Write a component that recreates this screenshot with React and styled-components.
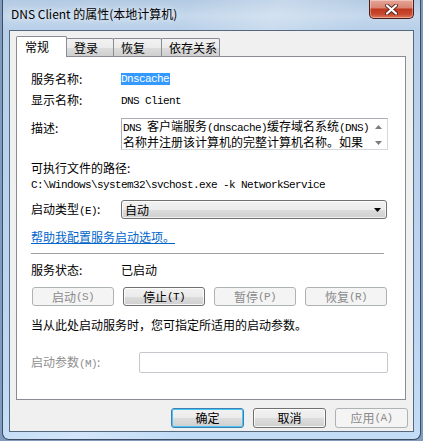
import React from "react";
import styled, { createGlobalStyle, css } from "styled-components";

const GlobalStyle = createGlobalStyle`
  html, body {
    margin: 0;
    padding: 0;
    background: #7f9cbf;
  }
  body {
    font-family: "Noto Sans CJK SC", "Noto Sans", sans-serif;
    font-size: 12px;
    color: #000;
  }
`;

const Frame = styled.div`
  width: 419px;
  height: 440px;
  margin-left: 2px;
  box-sizing: border-box;
  padding: 0 6px 7px 6px;
  display: flex;
  flex-direction: column;
  border: 1px solid #3d4c60;
  border-top: none;
  border-radius: 0 0 7px 7px;
  background:
    linear-gradient(115deg, rgba(255,255,255,0) 30%, rgba(255,255,255,0.25) 45%, rgba(255,255,255,0) 60%),
    linear-gradient(180deg, #b3cae3 0px, #c5d8ec 16px, #b7cfe9 30px, #bcd5f0 70%, #c4ddf7 100%);
`;

const TitleBar = styled.div`
  height: 30px;
  display: flex;
  justify-content: space-between;
  align-items: flex-start;
  padding-left: 2px;
`;

const Title = styled.div`
  margin-top: 6px;
  font-size: 12px;
  line-height: 16px;
  text-shadow: 0 0 6px rgba(255, 255, 255, 0.9);
`;

const CloseButton = styled.div`
  width: 45px;
  height: 19px;
  box-sizing: border-box;
  border: 1px solid #4b1e17;
  border-top: none;
  border-radius: 0 0 5px 5px;
  background: linear-gradient(180deg, #e6a597 0%, #d98674 42%, #c0381f 52%, #c94a30 80%, #dd7a5c 100%);
  box-shadow: inset 0 0 0 1px rgba(255, 255, 255, 0.35);
  display: flex;
  align-items: center;
  justify-content: center;
`;

const Client = styled.div`
  flex: 1;
  box-sizing: border-box;
  background: #f0f0f0;
  border: 1px solid #56687e;
  display: flex;
  flex-direction: column;
  padding: 5px 5px 0 6px;
`;

const TabStrip = styled.div`
  display: flex;
  height: 21px;
  margin-bottom: -1px;
  position: relative;
  z-index: 1;
`;

const Tab = styled.div`
  box-sizing: border-box;
  width: ${p => p.$w}px;
  border: 1px solid #898c95;
  border-bottom: none;
  border-radius: 2px 2px 0 0;
  margin-left: -1px;
  display: flex;
  align-items: center;
  padding-left: 7px;
  line-height: 16px;
  ${p => p.$active ? css`
    height: 21px;
    margin-left: 0;
    background: #fff;
    padding-left: 8px;
  ` : css`
    height: 18px;
    margin-top: 2px;
    background: linear-gradient(180deg, #f2f2f2 0%, #ebebeb 50%, #dddddd 51%, #cfcfcf 100%);
  `}
`;

const Panel = styled.div`
  width: 390px;
  height: 344px;
  box-sizing: border-box;
  background: #fff;
  border: 1px solid #898c95;
  padding: 11px 17px 0 14px;
  display: flex;
  flex-direction: column;
`;

const Row = styled.div`
  display: flex;
  align-items: ${p => p.$top ? "flex-start" : "center"};
  height: ${p => p.$h}px;
  margin-top: ${p => p.$mt || 0}px;
  flex-shrink: 0;
`;

const Label = styled.div`
  width: ${p => p.$w || 90}px;
  flex-shrink: 0;
  line-height: 16px;
  color: ${p => p.$disabled ? "#8f8f8f" : "#000"};
  padding-top: ${p => p.$pt || 0}px;
`;

const Text = styled.div`
  line-height: 16px;
  white-space: nowrap;
`;

const Ascii = styled.span`
  font-family: "Liberation Mono", "DejaVu Sans Mono", monospace;
  font-size: 11px;
  letter-spacing: -0.6px;
`;

const Selected = styled(Ascii)`
  display: inline-block;
  background: #3399ff;
  color: #fff;
  line-height: 12px;
  height: 12px;
  padding-right: 1px;
`;

const DescBox = styled.div`
  width: 267px;
  height: 32px;
  box-sizing: border-box;
  border: 1px solid #abadb3;
  border-right-color: #d5d8dd;
  border-bottom-color: #d5d8dd;
  background: #fff;
  display: flex;
`;

const DescText = styled.div`
  flex: 1;
  padding-left: 1px;
  line-height: 13px;
  white-space: nowrap;
`;

const ScrollBar = styled.div`
  width: 15px;
  margin-right: 1px;
  display: flex;
  flex-direction: column;
  justify-content: space-between;
  align-items: center;
  padding: 6px 0 4px;
`;

const Combo = styled.div`
  width: 266px;
  height: 19px;
  box-sizing: border-box;
  border: 1px solid #707070;
  border-radius: 3px;
  background: linear-gradient(180deg, #f2f2f2 0%, #ebebeb 50%, #dddddd 51%, #cfcfcf 100%);
  box-shadow: inset 0 0 0 1px rgba(255, 255, 255, 0.7);
  display: flex;
  align-items: center;
  justify-content: space-between;
  padding: 0 5px 0 3px;
  line-height: 16px;
`;

const Link = styled.a`
  color: #0066cc;
  text-decoration: underline;
  line-height: 16px;
  cursor: pointer;
`;

const Separator = styled.div`
  width: 353px;
  height: 1px;
  margin-top: 8px;
  background: #a0a0a0;
  flex-shrink: 0;
`;

const ButtonRow = styled.div`
  display: flex;
  gap: 9px;
  margin-top: ${p => p.$mt || 0}px;
  padding-left: ${p => p.$pl || 0}px;
  justify-content: ${p => p.$end ? "flex-end" : "flex-start"};
  flex-shrink: 0;
`;

const Button = styled.div`
  width: ${p => p.$w}px;
  height: ${p => p.$h}px;
  box-sizing: border-box;
  border-radius: 3px;
  display: flex;
  align-items: center;
  justify-content: center;
  line-height: 16px;
  ${p => p.$disabled ? css`
    border: 1px solid #adb2b5;
    background: #f4f4f4;
    color: #8a8a8a;
  ` : css`
    border: 1px solid ${p.$default ? "#3c7fb1" : "#707070"};
    background: linear-gradient(180deg, #f2f2f2 0%, #ebebeb 50%, #dddddd 51%, #cfcfcf 100%);
    box-shadow: inset 0 0 0 1px ${p.$default ? "#48c5f2" : "rgba(255,255,255,0.8)"};
    color: #000;
  `}
`;

const ParamInput = styled.div`
  width: 249px;
  height: 21px;
  box-sizing: border-box;
  border: 1px solid #c5c8cc;
  border-radius: 2px;
  background: #fff;
`;

function Arrow({ up, color = "#7d7d7d", w = 7, h = 4 }) {
  return (
    <svg width={w} height={h} viewBox={`0 0 ${w} ${h}`}>
      <polygon
        points={up ? `0,${h} ${w / 2},0 ${w},${h}` : `0,0 ${w},0 ${w / 2},${h}`}
        fill={color}
      />
    </svg>
  );
}

function CloseX() {
  return (
    <svg width="13" height="11" viewBox="0 0 13 11">
      <path d="M2 1.5 L11 9.5 M11 1.5 L2 9.5" stroke="#5a2a22" strokeWidth="4" strokeLinecap="round" />
      <path d="M2 1.5 L11 9.5 M11 1.5 L2 9.5" stroke="#fff" strokeWidth="2.2" strokeLinecap="round" />
    </svg>
  );
}

const tabs = [
  { name: "常规", w: 51, active: true },
  { name: "登录", w: 48 },
  { name: "恢复", w: 49 },
  { name: "依存关系", w: 59 },
];

export default function App() {
  return (
    <>
      <GlobalStyle />
      <Frame>
        <TitleBar>
          <Title>DNS Client 的属性(本地计算机)</Title>
          <CloseButton><CloseX /></CloseButton>
        </TitleBar>
        <Client>
          <TabStrip>
            {tabs.map(t => (
              <Tab key={t.name} $w={t.w} $active={t.active}>{t.name}</Tab>
            ))}
          </TabStrip>
          <Panel>
            <Row $h={22}>
              <Label>服务名称:</Label>
              <Selected>Dnscache</Selected>
            </Row>
            <Row $h={20}>
              <Label>显示名称:</Label>
              <Text><Ascii>DNS Client</Ascii></Text>
            </Row>
            <Row $h={32} $mt={8} $top>
              <Label $pt={2}>描述:</Label>
              <DescBox>
                <DescText>
                  <Ascii>DNS </Ascii>客户端服务<Ascii>(dnscache)</Ascii>缓存域名系统<Ascii>(DNS)</Ascii>
                  <br />
                  名称并注册该计算机的完整计算机名称。如果
                </DescText>
                <ScrollBar>
                  <Arrow up />
                  <Arrow />
                </ScrollBar>
              </DescBox>
            </Row>
            <Row $h={16} $mt={10}>
              <Text>可执行文件的路径:</Text>
            </Row>
            <Row $h={16}>
              <Text><Ascii>C:\Windows\system32\svchost.exe -k NetworkService</Ascii></Text>
            </Row>
            <Row $h={19} $mt={8}>
              <Label>启动类型<Ascii>(E)</Ascii>:</Label>
              <Combo>
                <span>自动</span>
                <Arrow color="#000" w={7} h={4} />
              </Combo>
            </Row>
            <Row $h={16} $mt={10}>
              <Link>帮助我配置服务启动选项。</Link>
            </Row>
            <Separator />
            <Row $h={16} $mt={8}>
              <Label>服务状态:</Label>
              <Text>已启动</Text>
            </Row>
            <ButtonRow $mt={9} $pl={1}>
              <Button $w={82} $h={19} $disabled>启动<Ascii>(S)</Ascii></Button>
              <Button $w={82} $h={19}>停止<Ascii>(T)</Ascii></Button>
              <Button $w={82} $h={19} $disabled>暂停<Ascii>(P)</Ascii></Button>
              <Button $w={82} $h={19} $disabled>恢复<Ascii>(R)</Ascii></Button>
            </ButtonRow>
            <Row $h={16} $mt={11}>
              <Text>当从此处启动服务时，您可指定所适用的启动参数。</Text>
            </Row>
            <Row $h={21} $mt={19}>
              <Label $w={108} $disabled>启动参数<Ascii>(M)</Ascii>:</Label>
              <ParamInput />
            </Row>
          </Panel>
          <ButtonRow $mt={8} $end>
            <Button $w={73} $h={20} $default>确定</Button>
            <Button $w={73} $h={20}>取消</Button>
            <Button $w={73} $h={20} $disabled>应用<Ascii>(A)</Ascii></Button>
          </ButtonRow>
        </Client>
      </Frame>
    </>
  );
}
